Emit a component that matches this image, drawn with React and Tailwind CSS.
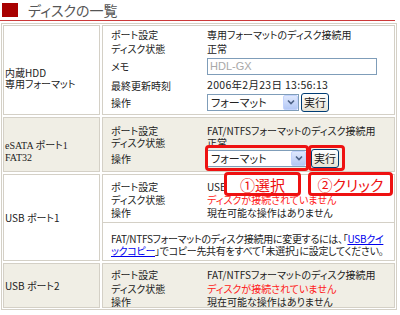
import React from 'react'

const jp = "font-['Noto_Sans_CJK_JP',sans-serif] [font-feature-settings:'palt']"

function Item({ h, label, children }) {
  return (
    <div className="flex items-center" style={{ height: h }}>
      <div className="w-[96px] shrink-0 whitespace-nowrap">{label}</div>
      <div className="flex-1 flex items-center whitespace-nowrap">{children}</div>
    </div>
  )
}

function Select({ w }) {
  return (
    <div className="flex items-center h-[17px] border border-[#7f9db9] bg-white" style={{ width: w }}>
      <span className="flex-1 pl-[3px] text-[11px] leading-none">フォーマット</span>
      <span className="w-[15px] h-[15px] rounded-[2px] bg-gradient-to-b from-[#dfe8fd] to-[#b4c8f5] border border-[#c3d3fd] flex items-center justify-center">
        <svg width="8" height="6" viewBox="0 0 8 6"><path d="M1 1.5 L4 4.5 L7 1.5" fill="none" stroke="#4d6185" strokeWidth="1.6" /></svg>
      </span>
    </div>
  )
}

function Btn({ ml = 'ml-[2px]' }) {
  return (
    <span className={`${ml} h-[19px] w-[28px] flex items-center justify-center rounded-[3px] border border-[#003c74] bg-gradient-to-b from-white to-[#e6e3d6] text-[11px] leading-none`}>実行</span>
  )
}

function Cell({ left, children, bg, h, leftCls = '' }) {
  return (
    <div className="flex gap-[2px]" style={{ height: h }}>
      <div className={`w-[97px] shrink-0 border border-[#d4d0c6] ${bg} flex items-center pl-[1px] ${leftCls}`}>{left}</div>
      <div className={`flex-1 border border-[#d4d0c6] ${bg} pl-[8px]`}>{children}</div>
    </div>
  )
}

function Note({ className = '', children }) {
  return (
    <div className={`absolute flex items-center justify-center rounded-[4px] border-[3px] border-[#ee1111] bg-white text-[#ee1111] text-[15px] leading-none ${className}`}>{children}</div>
  )
}

export default function App() {
  return (
    <div className={`relative w-[400px] h-[315px] bg-white text-[10px] text-[#222] ${jp}`}>
      <div className="flex items-center h-[21px] border-b border-[#cc3a3a] mr-[5px]">
        <span className="ml-[2px] w-[16px] h-[14px] bg-[#a80000]" />
        <span className="ml-[10px] text-[14px] leading-none text-[#555]">ディスクの一覧</span>
      </div>

      <div className="ml-[1px] mt-[2px] w-[396px] border border-[#d4d0c6] p-[1px] flex flex-col gap-[2px]">
        <Cell bg="bg-white" h={90} leftCls="pt-[16px]" left={<div className="leading-[11px]">内蔵HDD<br />専用フォーマット</div>}>
          <div className="pt-[1px]">
            <Item h={14} label="ポート設定">専用フォーマットのディスク接続用</Item>
            <Item h={14} label="ディスク状態">正常</Item>
            <Item h={22} label="メモ">
              <div className="w-[170px] h-[17px] border border-[#7f9db9] bg-white flex items-center pl-[2px] text-[11px] text-[#a8a8a8] font-['Liberation_Sans',sans-serif]">HDL-GX</div>
            </Item>
            <Item h={16} label="最終更新時刻"><span className="text-[10.5px] tracking-[0.3px]">2006年2月23日 13:56:13</span></Item>
            <Item h={18} label="操作"><Select w={92} /><Btn /></Item>
          </div>
        </Cell>

        <Cell bg="bg-[#f0eee5]" h={55} leftCls="pt-[14px]" left={<div className="leading-[12px] font-['Liberation_Serif','Noto_Sans_CJK_JP',serif]">eSATA ポート1<br />FAT32</div>}>
          <div className="pt-[5px]">
            <Item h={14} label="ポート設定">FAT/NTFSフォーマットのディスク接続用</Item>
            <Item h={11} label="ディスク状態">正常</Item>
            <Item h={20} label="操作"><Select w={100} /><Btn ml="ml-[4px]" /></Item>
          </div>
        </Cell>

        <Cell bg="bg-white" h={87} left={<div>USB ポート1</div>}>
          <div className="-ml-[8px] h-full flex flex-col">
            <div className="pl-[8px] pt-[5px] h-[47px]">
              <Item h={13} label="ポート設定">USB</Item>
              <Item h={13} label="ディスク状態"><span className="text-[#ff2020]">ディスクが接続されていません</span></Item>
              <Item h={13} label="操作">現在可能な操作はありません</Item>
            </div>
            <div className="border-t border-[#d4d0c6] pl-[8px] pt-[10px] leading-[12px] whitespace-nowrap tracking-[-0.3px]">
              FAT/NTFSフォーマットのディスク接続用に変更するには、「<span className="text-[#0000ee] underline">USBクイ</span><br />
              <span className="text-[#0000ee] underline">ックコピー</span>」でコピー先共有をすべて「未選択」に設定してください。
            </div>
          </div>
        </Cell>

        <Cell bg="bg-[#f0eee5]" h={45} left={<div>USB ポート2</div>}>
          <div className="pt-[3px]">
            <Item h={14} label="ポート設定">FAT/NTFSフォーマットのディスク接続用</Item>
            <Item h={14} label="ディスク状態"><span className="text-[#ff2020]">ディスクが接続されていません</span></Item>
            <Item h={13} label="操作">現在可能な操作はありません</Item>
          </div>
        </Cell>
      </div>

      <div className="absolute left-[205px] top-[145px] w-[104px] h-[26px] rounded-[4px] border-[3px] border-[#ee1111]" />
      <div className="absolute left-[308px] top-[145px] w-[37px] h-[26px] rounded-[4px] border-[3px] border-[#ee1111]" />
      <Note className="left-[224px] top-[172px] w-[77px] h-[24px]">①選択</Note>
      <Note className="left-[308px] top-[172px] w-[85px] h-[24px]">②クリック</Note>
    </div>
  )
}
